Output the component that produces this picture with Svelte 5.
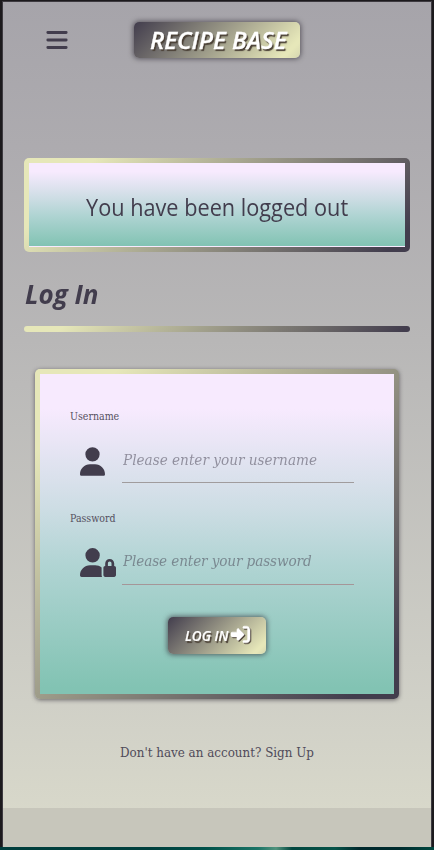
<script>
  const fields = [
    { id: 'username', label: 'Username', type: 'text', hint: 'Please enter your username', locked: false },
    { id: 'password', label: 'Password', type: 'password', hint: 'Please enter your password', locked: true }
  ];
</script>

<div class="backdrop">
  <div class="page">
    <header>
      <button class="menu" aria-label="Menu">
        <svg viewBox="0 0 22 18" width="22" height="18"><path d="M1.8 1.5h18.400M1.8 9h18.400M1.8 16.5h18.400" stroke="currentColor" stroke-width="2.800" stroke-linecap="round" /></svg>
      </button>
      <a class="brand" href="#home"><span>RECIPE BASE</span></a>
    </header>

    <main>
      <div class="flash"><p>You have been logged out</p></div>
      <h1><span>Log In</span></h1>
      <div class="rule"></div>

      <form>
        {#each fields as f}
          <div class="field">
            <label for={f.id}><span>{f.label}</span></label>
            <div class="row">
              {#if f.locked}
                <svg class="icon" viewBox="0 0 640 512" width="36" height="29"><path fill="currentColor" d="M224 256A128 128 0 1 0 224 0a128 128 0 1 0 0 256zm-45.700 48C79.800 304 0 383.800 0 482.300 0 498.700 13.300 512 29.700 512H392.600c-5.400-9.400-8.600-20.300-8.600-32V352c0-2.100.1-4.200.3-6.300-31-26-71-41.700-114.600-41.700H178.300zM528 240c17.700 0 32 14.300 32 32v48H496V272c0-17.700 14.300-32 32-32zm-80 32v48c-17.700 0-32 14.300-32 32V480c0 17.700 14.300 32 32 32H608c17.700 0 32-14.300 32-32V352c0-17.700-14.300-32-32-32V272c0-44.200-35.800-80-80-80s-80 35.800-80 80z" /></svg>
              {:else}
                <svg class="icon" viewBox="0 0 448 512" width="25" height="29"><path fill="currentColor" d="M224 256A128 128 0 1 0 224 0a128 128 0 1 0 0 256zm-45.700 48C79.800 304 0 383.800 0 482.300 0 498.700 13.300 512 29.700 512H418.300c16.400 0 29.700-13.300 29.700-29.700C448 383.800 368.200 304 269.700 304H178.300z" /></svg>
              {/if}
              <input id={f.id} class:rosy={f.locked} type={f.type} placeholder={f.hint} />
            </div>
          </div>
        {/each}
        <button class="submit" type="button">
          <span>LOG IN</span>
          <svg viewBox="0 0 512 512" width="19" height="19"><path fill="currentColor" stroke="currentColor" stroke-width="14" d="M352 96h64c17.700 0 32 14.300 32 32v256c0 17.700-14.300 32-32 32h-64c-17.700 0-32 14.300-32 32s14.300 32 32 32h64c53 0 96-43 96-96V128c0-53-43-96-96-96h-64c-17.700 0-32 14.300-32 32s14.300 32 32 32zm-9.400 182.600c12.500-12.500 12.500-32.800 0-45.300l-128-128c-9-9-23-11.800-35-6.900S160 115 160 128v64H32c-17.700 0-32 14.300-32 32v64c0 17.700 14.300 32 32 32h128v64c0 13 8 25 20 30s26 2 35-7z" /></svg>
        </button>
      </form>

      <p class="signup"><span>Don't have an account? <a href="#signup">Sign Up</a></span></p>
    </main>
    <footer></footer>
  </div>
</div>

<style>
  :global(body) { margin: 0; }
  * { box-sizing: border-box; }
  .backdrop {
    height: 850px;
    padding: 1px 2px 3px;
    overflow: hidden;
    background:
      linear-gradient(90deg, #003e3c 0, #003f3d 150px, #005149 205px, #1b7466 258px, #52937d 276px, #02473f 292px, #075348 335px, #00282c 360px, #002c2e 400px, #00483f 434px) bottom / 100% 3px no-repeat,
      #1c1a1d;
  }
  .page {
    height: 846px;
    display: flex;
    flex-direction: column;
    border: solid #3d3a40;
    border-width: 1px 1px 0;
    background: linear-gradient(#a6a4aa, #adabaf 17%, #b8b7b7 40%, #d0d0c7 83%, #d8d8ca 96%);
    color: #423d4d;
    font-family: "Open Sans", "Noto Sans", sans-serif;
  }
  header { height: 156px; padding: 20px 0 0 43px; display: flex; align-items: flex-start; }
  button { font: inherit; border: 0; padding: 0; }
  .menu { width: 22px; height: 36px; display: grid; place-items: center; background: none; color: #423d4d; }
  .brand, .submit {
    border-radius: 5px;
    background: linear-gradient(135deg, #423d4d 0, #e6e7b9 90%, #e6e7b9 92%, #d5d6b0 100%);
    box-shadow: 0 0 5px 1px rgba(50, 46, 55, .65);
    color: #fff;
    font-style: italic;
    font-weight: 600;
    text-shadow: 1.500px 1.500px 1px #4a4036;
    text-decoration: none;
    white-space: nowrap;
  }
  .brand { width: 166px; height: 36px; margin-left: 66px; padding-left: 16px; font-size: 22.500px; line-height: 37px; -webkit-text-stroke: .3px #fff; }
  .brand span, h1 span, .flash p, .submit span { display: inline-block; transform-origin: left; }
  .brand span { transform: scaleX(1.075); }
  main { flex: 1; padding: 0 21px; }
  .flash {
    height: 94px;
    border: 5px solid transparent;
    border-radius: 5px;
    background:
      linear-gradient(#f7eafe 0, #f7eafe 10%, #cddde4 42%, #b0d4d3 62%, #82c3b3 98.500%, #f7eafe 99%) padding-box,
      linear-gradient(135deg, #e6e7b9 15%, #423d4d 95%) border-box;
    font-size: 24.500px;
    padding-left: 57px;
  }
  .flash p { margin: 0; line-height: 88px; white-space: nowrap; transform: scaleX(.886); }
  h1 { margin: 22px 0 0 1px; height: 52px; font-size: 26.500px; line-height: 41px; font-style: italic; font-weight: 700; }
  h1 span { transform: scaleX(.98); }
  .rule { height: 6px; border-radius: 3px; background: linear-gradient(135deg, #e6e7b9 10%, #423d4d 98%); }
  form {
    height: 330px;
    margin: 37px 11px 0;
    padding: 34px 40px 0 30px;
    border: 5px solid transparent;
    border-radius: 5px;
    background:
      linear-gradient(#f7eafe 0, #f7eafe 11%, #cddde4 42%, #b0d4d3 60%, #82c3b3 98%) padding-box,
      linear-gradient(135deg, #e6e7b9 12%, #423d4d 93%) border-box;
    box-shadow: 0 1px 4px rgba(50, 46, 55, .65);
    display: flex;
    flex-direction: column;
  }
  .field { height: 101.500px; font-family: "DejaVu Serif Condensed", "DejaVu Serif", serif; font-stretch: condensed; }
  label { display: block; height: 17px; font-size: 10.500px; line-height: 17px; color: #55505f; }
  .row { display: flex; height: 58px; }
  .icon { display: block; margin: 22px 0 0 10.200px; flex: none; }
  .field:nth-child(2) .icon { margin-top: 21px; }
  input {
    width: 232px;
    margin-left: auto;
    padding: 12px 0 0 1px;
    border: 0;
    border-bottom: 1px solid #a09c9d;
    border-radius: 0;
    background: none;
    font: italic 15.150px "DejaVu Serif Condensed", "DejaVu Serif", serif;
    font-stretch: condensed;
    outline: 0;
  }
  input.rosy { border-color: #a59698; letter-spacing: -.12px; }
  input::placeholder { color: #423d4d; opacity: .5; }
  .submit { display: flex; align-items: center; width: 98px; height: 37px; margin: 6px 0 0 98px; padding-left: 16px; font-size: 14px; -webkit-text-stroke: .2px #fff; }
  .submit span { width: 47px; transform: scaleX(.97); }
  .submit svg { margin-top: -3px; filter: drop-shadow(1px 1px .5px #4a4036); overflow: visible; flex: none; }
  .signup { margin: 44px 0 0 96px; font: 13.250px/20px "DejaVu Serif Condensed", "DejaVu Serif", serif; font-stretch: condensed; white-space: nowrap; color: #504b5a; }
  .signup a { color: inherit; text-decoration: none; }
  footer { height: 39px; background: #c7c6bb; }
</style>
